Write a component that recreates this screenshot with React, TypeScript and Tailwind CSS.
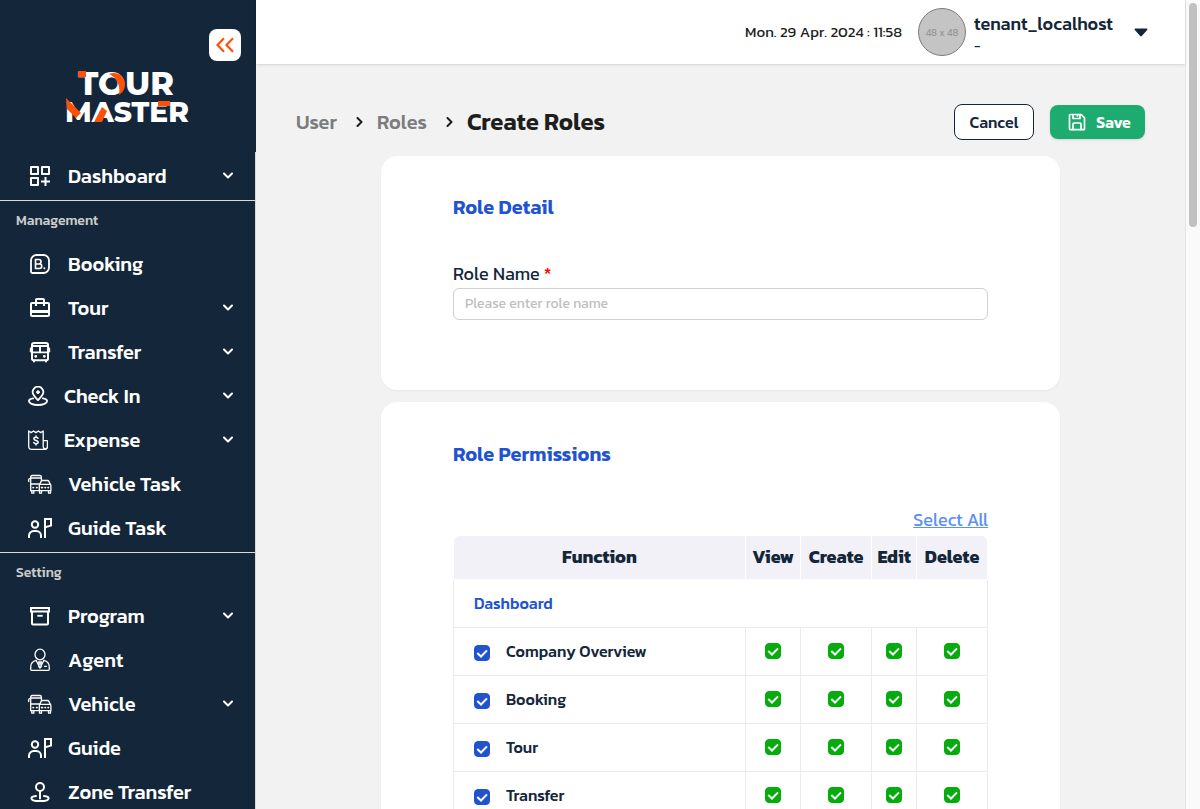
import { useState } from "react";
import type { ReactNode } from "react";
import { MdOutlineCardTravel } from "react-icons/md";

const stroke = {
  fill: "none",
  stroke: "currentColor",
  strokeLinecap: "round" as const,
  strokeLinejoin: "round" as const,
};

function DashboardIcon() {
  return (
    <svg viewBox="0 0 24 24" className="size-6" fill="none" stroke="currentColor" strokeWidth="2">
      <path d="M3 3h7v7H3zM14 3h7v7h-7zM3 14h7v7H3z" strokeLinejoin="round" />
      <path d="M17.500 13v9M13 17.500h9" />
    </svg>
  );
}

function BookingIcon() {
  return (
    <svg viewBox="0 0 24 24" className="size-6" {...stroke} strokeWidth="1.8">
      <path d="M3 8.500A5.500 5.500 0 0 1 8.500 3h7A5.500 5.500 0 0 1 21 8.500v7a5.500 5.500 0 0 1-5.500 5.500H4.500A1.500 1.500 0 0 1 3 19.500z" />
      <path d="M7.500 12h4a2.250 2.250 0 0 1 0 4.500h-4V7.500h3.300a2.250 2.250 0 0 1 0 4.500" strokeWidth="1.600" />
      <path d="M16.300 16.300h.1" strokeWidth="1.900" />
    </svg>
  );
}

function BusIcon() {
  return (
    <svg viewBox="0 0 24 24" className="size-6" {...stroke} strokeWidth="2">
      <path d="M6 3h12a2 2 0 0 1 2 2v14a1.200 1.200 0 0 1-1.200 1.200H5.200A1.200 1.200 0 0 1 4 19V5a2 2 0 0 1 2-2z" />
      <path d="M4.500 6h15M4.500 12.400h15M12 6v6.400" strokeWidth="1.900" />
      <path d="M2.800 8.500v3M21.200 8.500v3M6 20.500v1M18 20.500v1" />
      <path d="M7.700 16.300h.1M16.300 16.300h.1" strokeWidth="2.800" />
    </svg>
  );
}

function CheckInIcon() {
  return (
    <svg viewBox="0 0 20 20" className="size-5" {...stroke} strokeWidth="1.8">
      <path d="M10 14.200C7 11 4.600 9 4.600 6.100a5.400 5.400 0 0 1 10.800 0c0 2.900-2.400 4.900-5.400 8.100z" />
      <circle cx="10" cy="6.200" r="1.400" fill="currentColor" strokeWidth="1" />
      <path d="M5.200 12.300C2.600 12.700.9 13.700.9 15c0 2.300 4 4 9.100 4s9.100-1.700 9.100-4c0-1.300-1.700-2.300-4.300-2.700" />
    </svg>
  );
}

function ExpenseIcon() {
  return (
    <svg viewBox="0 0 20 20" className="size-5" {...stroke} strokeWidth="1.300">
      <path d="M16.800 19.300H3.200A2.500 2.500 0 0 1 .7 16.800V1l2.500 1.600L5.500 1l2.400 1.600L10.300 1l2.400 1.600L15.200 1v15.800a2.200 2.200 0 0 0 4.200.500v-6.600h-4.200M16.800 19.300a2.300 2.300 0 0 0 2.600-2.500" />
      <path d="M10 8.300C9.700 7.500 9 7.200 8 7.200c-1.300 0-2.100.600-2.100 1.600 0 2.300 4.300 1 4.300 3.300 0 1-.9 1.600-2.200 1.600-1.100 0-1.900-.4-2.200-1.200M8 6v1.200M8 13.700V15" strokeWidth="1.500" />
    </svg>
  );
}

function VehicleIcon() {
  return (
    <svg viewBox="0 0 24 24" className="size-6" {...stroke} strokeWidth="1.300">
      <path d="M.7 9.500V7.600c0-.7.4-1 1.100-1h1M2.700 18.500V5.200c0-1 .5-1.700 1.500-1.700h7.600c1 0 1.600.7 1.600 1.700v3.300M2.700 6h10.600M2.700 12h8.600" />
      <path d="M11.300 18.700v-4.900c0-1 .4-1.600.8-2.300l1-2.100c.3-.6.700-.9 1.300-.9h5.200c.7 0 1 .3 1.300.9l1 2.100c.5.700 1 1.300 1 2.300v4.900H2.700M11.800 12.400h10.300" />
      <path d="M3.800 19v2.200h2V19M11.500 19v2.200h2V19M20.500 19v2.200h2V19" />
      <path d="M5 15.600h.5M8.600 15.600h.5M13.500 15.600h1M17 15.600h.5M20 15.600h.5" strokeWidth="1.600" />
    </svg>
  );
}

function GuideIcon() {
  return (
    <svg viewBox="0 0 24 24" className="size-6" fill="none" stroke="currentColor" strokeWidth="2">
      <circle cx="7" cy="8.500" r="3.200" />
      <path d="M1 22v-2.300A4.700 4.700 0 0 1 5.700 15h2.600a4.700 4.700 0 0 1 4.700 4.700V22" />
      <path d="M17 22V3h6v6.600l-6 1.600" />
    </svg>
  );
}

function ProgramIcon() {
  return (
    <svg viewBox="0 0 24 24" className="size-6" fill="none" stroke="currentColor" strokeWidth="2">
      <path d="M3 4h18v3.600H3zM4 7.600V19.500c0 .6.300 1 1 1h14c.7 0 1-.4 1-1V7.600" />
      <path d="M9.300 11.800h5.400" strokeWidth="1.800" />
    </svg>
  );
}

function AgentIcon() {
  return (
    <svg viewBox="0 0 24 24" className="size-6" {...stroke} strokeWidth="1.300">
      <ellipse cx="12" cy="6.500" rx="5" ry="5.300" />
      <path d="M8.200 12.300C4.500 13.200 2.700 15.700 2.700 19v2.200c0 .7.300 1.100 1 1.100h16.600c.7 0 1-.4 1-1.100V19c0-3.300-1.800-5.800-5.500-6.700" />
      <path d="M8.200 12.500 12 20l3.800-7.500M10.600 14h2.800l-.7 1.700.6 2.800L12 20l-1.300-1.500.6-2.800zM16.500 18.300h2" />
    </svg>
  );
}

function ZoneIcon() {
  return (
    <svg viewBox="0 0 24 24" className="size-6" {...stroke} strokeWidth="2">
      <circle cx="12" cy="7" r="4" />
      <path d="M12 11.400v7M8 16c-2.700.3-4.600 1-4.600 2.200 0 1.900 3.800 2.900 8.600 2.900s8.600-1 8.600-2.900c0-1.200-1.900-1.900-4.600-2.200" />
    </svg>
  );
}

function SaveIcon() {
  return (
    <svg viewBox="0 0 18 18" className="size-[18px]" {...stroke} strokeWidth="1.700">
      <path d="M2.500 1.500h10.700l3.300 3.300v11.200a.7.700 0 0 1-.7.700H2.200a.7.700 0 0 1-.7-.7V2.500a1 1 0 0 1 1-1z" />
      <path d="M5 1.800v3.700h7V1.800M5 16.500V11c0-.6.300-1 1-1h6c.7 0 1 .4 1 1v5.500M9.500 2v1" />
    </svg>
  );
}

function Chevron({ className }: { className: string }) {
  return (
    <svg viewBox="0 0 10 10" className={className} {...stroke} strokeWidth="2">
      <path d="M1 2.500l4 4 4-4" />
    </svg>
  );
}

function Logo() {
  return (
    <svg
      viewBox="-2 -4 128 66"
      role="img"
      aria-label="Tour Master"
      className="mt-1 h-[66px] w-32 self-center overflow-visible"
      fontFamily="Montserrat, Lato, sans-serif"
      fill="#ffffff"
    >
      <text x="12" y="26" fontSize="32" fontWeight="800">TOUR</text>
      <text x="-1" y="53" fontSize="28" fontWeight="800">MASTER</text>
      <g fill="#ff5008">
        <path d="M12 2h8v6h-8zM92 32h12v5H92z" />
        <path d="M0 29l15 15-5 5-9-9z" />
        <path d="M28 53l8-15 5 4-5 11z" />
        <path d="M43 5c8-3 16 2 16 10 0 5-2 8-6 11 1-5 1-16-10-21z" />
      </g>
    </svg>
  );
}

type NavItem = { label: string; icon: ReactNode; expandable?: boolean };

const sections: { title?: string; items: NavItem[] }[] = [
  { items: [{ label: "Dashboard", icon: <DashboardIcon />, expandable: true }] },
  {
    title: "Management",
    items: [
      { label: "Booking", icon: <BookingIcon /> },
      { label: "Tour", icon: <MdOutlineCardTravel className="size-6" />, expandable: true },
      { label: "Transfer", icon: <BusIcon />, expandable: true },
      { label: "Check In", icon: <CheckInIcon />, expandable: true },
      { label: "Expense", icon: <ExpenseIcon />, expandable: true },
      { label: "Vehicle Task", icon: <VehicleIcon /> },
      { label: "Guide Task", icon: <GuideIcon /> },
    ],
  },
  {
    title: "Setting",
    items: [
      { label: "Program", icon: <ProgramIcon />, expandable: true },
      { label: "Agent", icon: <AgentIcon /> },
      { label: "Vehicle", icon: <VehicleIcon />, expandable: true },
      { label: "Guide", icon: <GuideIcon /> },
      { label: "Zone Transfer", icon: <ZoneIcon /> },
    ],
  },
];

function Sidebar() {
  return (
    <aside className="flex w-64 shrink-0 flex-col bg-[#14273a] text-white">
      <div className="flex h-[152px] shrink-0 flex-col">
        <button
          type="button"
          aria-label="Collapse menu"
          className="mt-[29px] mr-[15px] flex size-8 items-center justify-center self-end rounded-lg bg-white text-[#ff5008]"
        >
          <svg viewBox="0 0 20 16" className="h-4 w-5" fill="none" stroke="currentColor" strokeWidth="2.200">
            <path d="M9 1.200 2.500 8 9 14.800M18 1.200 11.500 8l6.500 6.800" />
          </svg>
        </button>
        <Logo />
      </div>
      <nav className="min-h-0 flex-1 overflow-y-auto border-r border-[#d9d9d9] [scrollbar-width:none]">
        {sections.map((section, i) => (
          <div key={i} className="border-b border-[#d9d9d9] pb-0.5 first:pt-0.5 last:border-b-0">
            {section.title && (
              <h2 className="flex h-[41px] items-center px-4 pb-0.5 text-sm font-medium text-[#cccccc]">
                {section.title}
              </h2>
            )}
            <ul>
              {section.items.map((item) => (
                <li key={item.label}>
                  <a href="#" className="flex h-11 items-center gap-4 pr-[22px] pl-7 text-xl font-medium">
                    {item.icon}
                    <span className="flex-1">{item.label}</span>
                    {item.expandable && <Chevron className="size-2.5" />}
                  </a>
                </li>
              ))}
            </ul>
          </div>
        ))}
      </nav>
    </aside>
  );
}

function Tick({
  label,
  checked,
  color,
  onChange,
}: {
  label: string;
  checked: boolean;
  color: string;
  onChange: () => void;
}) {
  return (
    <span className="inline-grid size-4 align-middle">
      <input
        type="checkbox"
        aria-label={label}
        checked={checked}
        onChange={onChange}
        className={`col-start-1 row-start-1 size-4 appearance-none rounded border border-gray-300 ${color}`}
      />
      <svg
        viewBox="0 0 16 16"
        className="pointer-events-none col-start-1 row-start-1 size-4 text-white"
        fill="none"
        stroke="currentColor"
        strokeWidth="2"
      >
        <path d="M3.300 8 7 11.500 13 5.400" />
      </svg>
    </span>
  );
}

const actions = ["View", "Create", "Edit", "Delete"];
const functions = ["Company Overview", "Booking", "Tour", "Transfer"];
const allKeys = functions.flatMap((f) => actions.map((a) => `${f}/${a}`));

function Permissions() {
  const [granted, setGranted] = useState<string[]>(allKeys);

  const toggle = (keys: string[]) =>
    setGranted((prev) =>
      keys.every((k) => prev.includes(k))
        ? prev.filter((k) => !keys.includes(k))
        : [...new Set([...prev, ...keys])],
    );

  return (
    <section className="rounded-2xl bg-white px-[72px] pt-9 pb-9 shadow-xs">
      <h2 className="text-xl leading-8 font-semibold text-[#2153d1]">Role Permissions</h2>
      <div className="mt-9 flex justify-end">
        <button
          type="button"
          onClick={() => setGranted(allKeys)}
          className="pb-0.5 text-lg leading-7 text-[#5b8ff9] underline"
        >
          Select All
        </button>
      </div>
      <table className="w-full table-fixed border-separate border-spacing-0 text-[#14273a]">
        <colgroup>
          <col />
          <col className="w-[55px]" />
          <col className="w-[71px]" />
          <col className="w-[45px]" />
          <col className="w-[71px]" />
        </colgroup>
        <thead>
          <tr className="h-11 text-lg font-bold">
            <th className="rounded-tl-md border-r border-b border-l border-white bg-[#f2f1f7] px-0 pt-0 pb-0.5">
              Function
            </th>
            {actions.map((a) => (
              <th
                key={a}
                className="border-r border-b border-white bg-[#f2f1f7] px-0 pt-0 pb-0.5 last:rounded-tr-md"
              >
                {a}
              </th>
            ))}
          </tr>
        </thead>
        <tbody>
          <tr className="h-12">
            <td
              colSpan={5}
              className="border-x border-b border-[#ebebeb] px-5 pt-0 pb-0.5 font-medium text-[#2153d1]"
            >
              Dashboard
            </td>
          </tr>
          {functions.map((f) => {
            const keys = actions.map((a) => `${f}/${a}`);
            return (
              <tr key={f} className="h-12">
                <td className="border-x border-b border-[#ebebeb] px-5 pt-0.5 pb-0">
                  <div className="flex items-center gap-4 font-medium">
                    <Tick
                      label={f}
                      color="checked:border-[#2153d1] checked:bg-[#2153d1]"
                      checked={keys.every((k) => granted.includes(k))}
                      onChange={() => toggle(keys)}
                    />
                    <span className="pb-1">{f}</span>
                  </div>
                </td>
                {keys.map((k) => (
                  <td key={k} className="border-r border-b border-[#ebebeb] px-0 pt-0 pb-0.5">
                    <div className="flex justify-center">
                      <Tick
                        label={k}
                        color="checked:border-[#04ac0c] checked:bg-[#04ac0c]"
                        checked={granted.includes(k)}
                        onChange={() => toggle([k])}
                      />
                    </div>
                  </td>
                ))}
              </tr>
            );
          })}
        </tbody>
      </table>
    </section>
  );
}

function TopBar() {
  return (
    <header className="z-10 flex h-16 shrink-0 items-center justify-end bg-white pr-[37px] shadow-sm">
      <time className="mr-4 text-[15px] text-[#1e1e1e]">Mon. 29 Apr. 2024 : 11:58</time>
      <div className="mr-2 flex size-12 items-center justify-center rounded-full border border-[#7d7d7d] bg-[#c4c4c4] text-[10px] text-[#969696]">
        48 x 48
      </div>
      <div className="w-40 pt-1 text-[#14273a]">
        <p className="text-lg leading-6 font-medium">tenant_localhost</p>
        <p className="text-sm leading-5">-</p>
      </div>
      <button type="button" aria-label="Account menu" className="text-[#14273a]">
        <svg viewBox="0 0 14 9" className="h-[9px] w-[14px]" fill="currentColor">
          <path d="M1.500.5h11c.9 0 1.300 1 .7 1.600L8 7.700c-.6.700-1.400.7-2 0L.8 2.100C.2 1.500.6.5 1.500.5z" />
        </svg>
      </button>
    </header>
  );
}

export default function App() {
  return (
    <div className="flex h-screen overflow-hidden bg-[#f2f2f2] font-[Kanit,Roboto,sans-serif]">
      <Sidebar />
      <div className="flex min-w-0 flex-1 flex-col">
        <TopBar />
        <main className="min-h-0 flex-1 overflow-y-auto px-10 pt-10 pb-10 [scrollbar-width:none]">
          <div className="flex items-center justify-between">
            <nav aria-label="Breadcrumb" className="flex items-center text-xl font-medium text-[#7c7c7c]">
              <a href="#">User</a>
              <Chevron className="mr-3 ml-[18px] size-2.5 -rotate-90 text-[#1e1e1e]" />
              <a href="#">Roles</a>
              <Chevron className="mr-3 ml-[18px] size-2.5 -rotate-90 text-[#1e1e1e]" />
              <h1 className="text-2xl font-semibold text-[#1e1e1e]">Create Roles</h1>
            </nav>
            <div className="flex items-center gap-4">
              <button
                type="button"
                className="h-9 w-20 rounded-lg border border-[#14273a] bg-white font-medium text-[#14273a]"
              >
                Cancel
              </button>
              <button
                type="submit"
                form="role-form"
                className="flex h-[34px] w-[95px] items-center justify-center gap-2.5 rounded-lg bg-[#1dab6f] pl-1 font-semibold text-white shadow-sm"
              >
                <SaveIcon />
                Save
              </button>
            </div>
          </div>
          <form id="role-form" onSubmit={(e) => e.preventDefault()} className="mx-auto mt-4 flex w-4/5 flex-col gap-3">
            <section className="rounded-2xl bg-white px-[72px] pt-9 pb-[70px] shadow-xs">
              <h2 className="text-xl leading-[30px] font-semibold text-[#2153d1]">Role Detail</h2>
              <label htmlFor="role-name" className="mt-[38px] block text-lg leading-7 text-[#14273a]">
                Role Name <span className="text-[#ff0000]">*</span>
              </label>
              <input
                id="role-name"
                type="text"
                placeholder="Please enter role name"
                className="block h-8 w-full rounded-md border border-[#d0d0d0] px-[11px] pb-0.5 text-sm text-[#14273a] placeholder:text-[#bfbfbf]"
              />
            </section>
            <Permissions />
          </form>
        </main>
      </div>
      <div aria-hidden="true" className="w-[15px] shrink-0 border-l border-[#e4e4e4] bg-[#fafafa] px-[3px] pt-[3px]">
        <div className="h-56 w-2 rounded-full bg-[#c1c1c1]" />
      </div>
    </div>
  );
}
